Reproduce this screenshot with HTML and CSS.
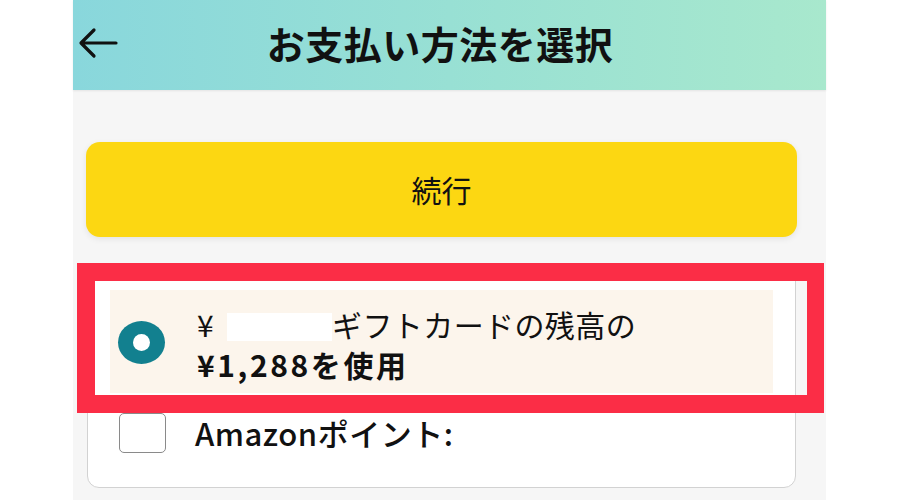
FILE: index.html
```html
<!DOCTYPE html>
<html lang="ja">
<head>
  <meta charset="UTF-8">
  <title>お支払い方法を選択</title>
  <link rel="stylesheet" href="styles.css">
</head>
<body>
  <div class="phone">
    <header class="topbar">
      <svg class="back" width="40" height="32" viewBox="0 0 40 32">
        <path d="M38 16 H4 M16 3 L3 16 L16 29" fill="none" stroke="#111" stroke-width="3.2" stroke-linecap="round" stroke-linejoin="round"/>
      </svg>
      <h1>お支払い方法を選択</h1>
    </header>

    <main class="content">
      <button class="continue">続行</button>

      <div class="card">
        <div class="option selected">
          <span class="radio"></span>
          <div class="label">
            <div class="line">¥<span class="masked"></span>ギフトカードの残高の</div>
            <div class="line strong">¥1,288を使用</div>
          </div>
        </div>
        <div class="option points">
          <span class="checkbox"></span>
          <div class="label medium">Amazonポイント:</div>
        </div>
      </div>

      <!-- 注目の枠 -->
      <div class="highlight-frame"></div>
    </main>
  </div>
</body>
</html>
```

FILE: styles.css
```css
* {
  box-sizing: border-box;
}

body {
  margin: 0;
  background-color: #fff;
  font-family: "Noto Sans CJK JP", "Noto Sans", sans-serif;
  color: #111;
  height: 500px;
  overflow: hidden;
}

.phone {
  width: 753px;
  margin-left: 73px;
  height: 500px;
  background-color: #f6f6f6;
}

.topbar {
  height: 90px;
  display: flex;
  align-items: center;
  background: linear-gradient(90deg, #89d7dc 0%, #98e0d4 50%, #a8e8cd 100%);
  box-shadow: 0 1px 2px rgba(0, 0, 0, 0.08);
}

.topbar .back {
  margin-left: 5px;
  margin-top: -4px;
  flex-shrink: 0;
}

.topbar h1 {
  flex: 1;
  margin: 0;
  padding-right: 64px;
  text-align: center;
  font-size: 38px;
  font-weight: 700;
  letter-spacing: 0.5px;
  margin-top: -6px;
}

.content {
  position: relative;
  padding: 52px 29px 0 13px;
}

.continue {
  display: block;
  width: 100%;
  height: 95px;
  border: none;
  border-radius: 14px;
  background-color: #fcd712;
  box-shadow: 0 2px 6px rgba(0, 0, 0, 0.08);
  font-family: inherit;
  font-size: 30px;
  font-weight: 400;
  color: #111;
  padding: 0 0 2px;
}

.card {
  margin-top: 30px;
  margin-left: 1px;
  margin-right: 1px;
  background-color: #fff;
  border: 1px solid #d2d2d2;
  border-radius: 12px;
  padding: 22px 22px 34px;
  height: 221px;
}

.option {
  display: flex;
  align-items: center;
}

.option.selected {
  height: 103px;
  background-color: #fcf5ec;
  padding-left: 8px;
}

.radio {
  width: 47px;
  height: 43px;
  border-radius: 50%;
  background-color: #12808f;
  display: flex;
  align-items: center;
  justify-content: center;
  flex-shrink: 0;
  margin-top: 2px;
}

.radio::after {
  content: "";
  width: 17px;
  height: 17px;
  border-radius: 50%;
  background-color: #fff;
}

.label {
  margin-left: 32px;
  font-size: 30px;
  line-height: 40px;
  padding-top: 4px;
}

.line {
  letter-spacing: 0.4px;
}

.masked {
  display: inline-block;
  width: 105px;
  height: 28px;
  background-color: #fff;
  vertical-align: -4px;
  margin-left: 13px;
}

.strong {
  font-weight: 700;
  letter-spacing: 2.6px;
}

.option.points {
  margin-top: 20px;
  padding-left: 9px;
}

.checkbox {
  width: 47px;
  height: 40px;
  border: 1.5px solid #8a8a8a;
  border-radius: 5px;
  flex-shrink: 0;
}

.label.medium {
  margin-left: 29px;
  padding-top: 0;
  font-size: 31px;
  font-weight: 500;
  letter-spacing: 0.5px;
}

.highlight-frame {
  position: absolute;
  left: 4px;
  top: 173px;
  width: 747px;
  height: 150px;
  border: 18px solid #fb2d46;
  border-right-width: 17px;
  pointer-events: none;
}
```
